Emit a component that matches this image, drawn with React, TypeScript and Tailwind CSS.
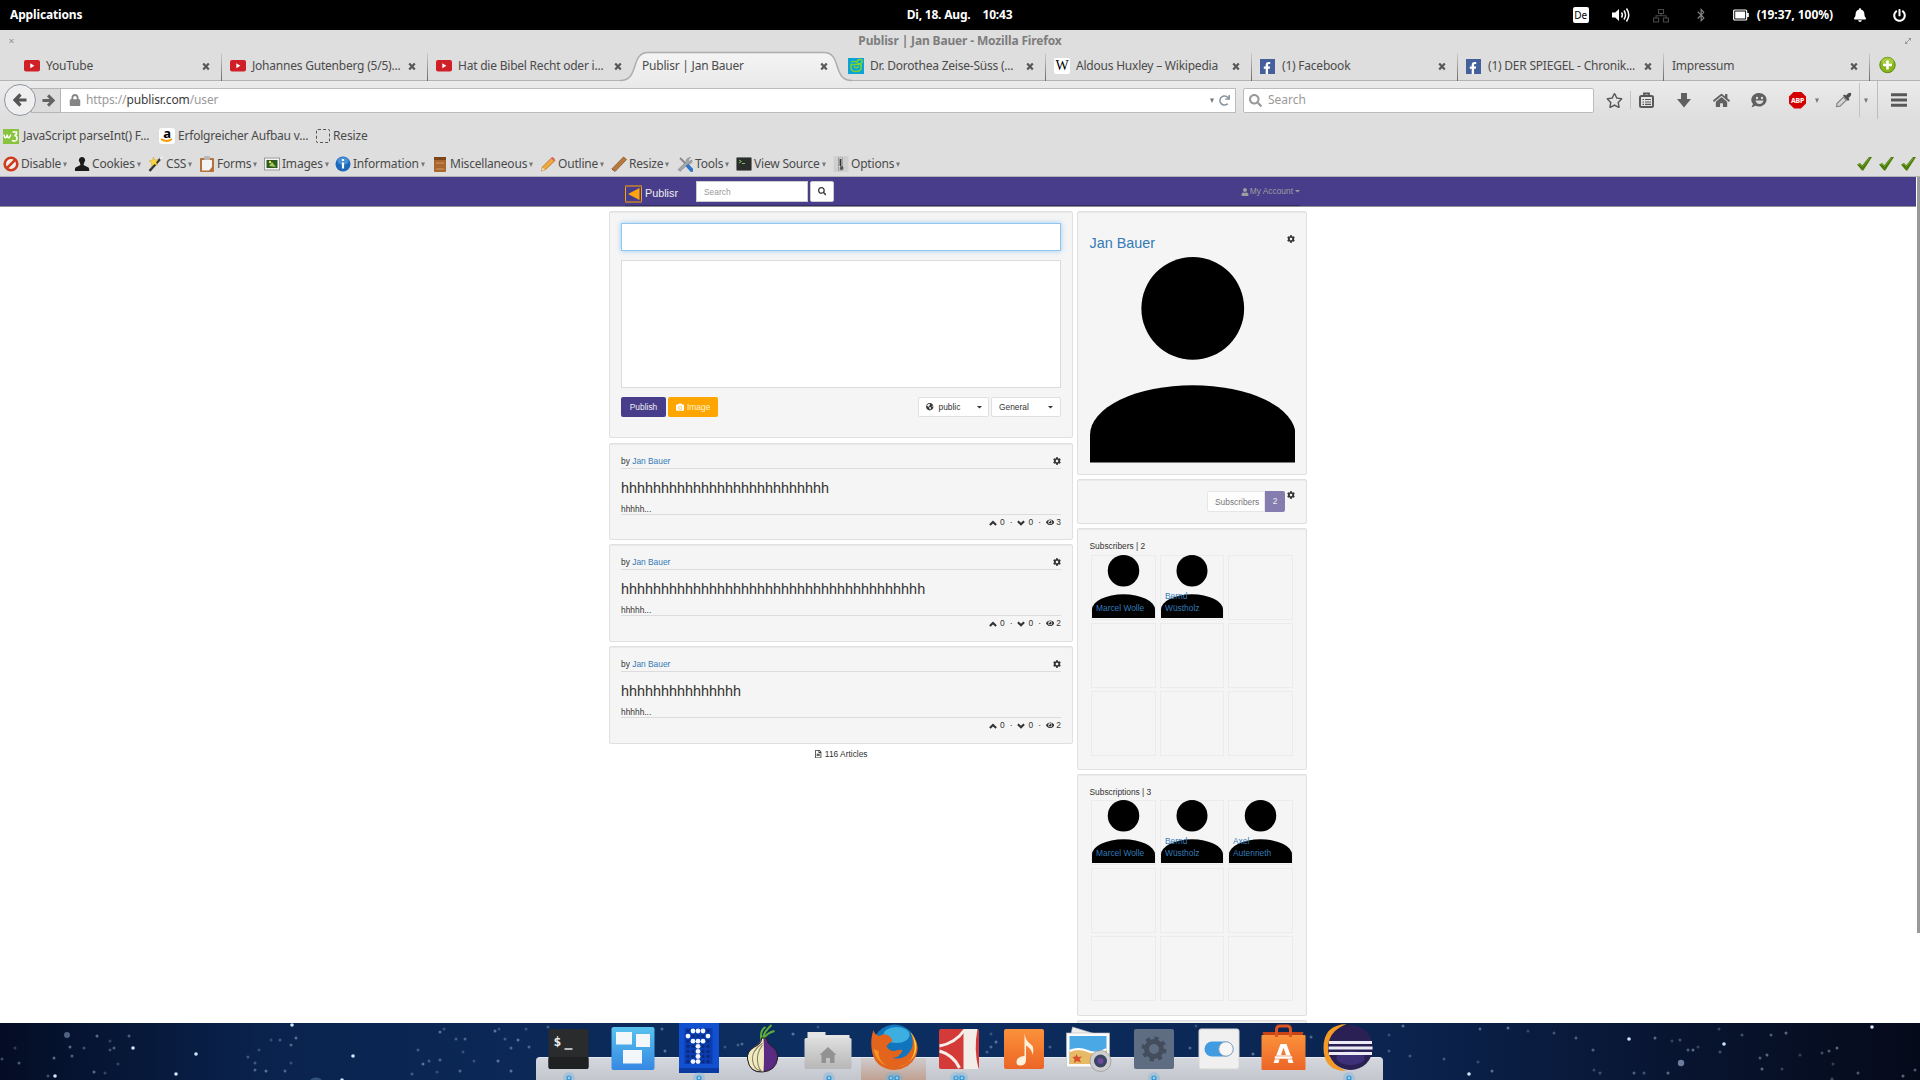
import React from "react";
import {
  FaLock, FaSearch, FaRedo, FaRegStar, FaHome,
  FaCog, FaEye, FaCamera, FaUser, FaGlobeAmericas, FaRegFileAlt,
  FaBell, FaPowerOff, FaFacebookF, FaBluetoothB,
} from "react-icons/fa";

type Kids = { children?: React.ReactNode };

/* ---------- small icons ---------- */

const YouTubeIcon = () => (
  <svg width="16" height="12" viewBox="0 0 16 12">
    <rect width="16" height="11.5" rx="2" fill="#cf2027" />
    <path d="M6.3 3.3 L10.4 5.8 L6.3 8.3Z" fill="#fff" />
  </svg>
);
const DnbIcon = () => (
  <svg width="16" height="16" viewBox="0 0 16 16">
    <rect width="16" height="16" fill="#0aa3d6" />
    <path d="M3 6.500h10v3q0 4-5 4t-5-4zM3 4q3-1.500 6 .5M9 4.500q0-3 3-3t2 2.500-5 1.500M5.500 8.500q3 2.500 5.500 0" fill="none" stroke="#7fd42a" strokeWidth="1.400" />
  </svg>
);
const WikiIcon = () => (
  <span className="flex h-4 w-4 items-center justify-center rounded-[2px] bg-white font-['Liberation_Serif',serif] text-[14px] leading-none text-black">W</span>
);
const FacebookIcon = () => (
  <span className="flex h-[15px] w-[15px] items-end justify-end bg-[#43609c] pr-[2px] text-[12px] text-white"><FaFacebookF /></span>
);
const Down = () => (
  <svg width="4" height="5" viewBox="0 0 4 5"><path d="M0 .5h4L2 5z" fill="#777" /></svg>
);
const Caret = ({ c = "#333" }: { c?: string }) => (
  <svg width="5" height="3" viewBox="0 0 5 3"><path d="M0 0h5L2.500 2.600z" fill={c} /></svg>
);
const CloseX = () => (
  <svg width="8" height="9" viewBox="0 0 8 9"><path d="M1.200 1.500 6.800 7.500M6.800 1.500 1.200 7.500" stroke="#585858" strokeWidth="2.200" /></svg>
);
const Check = () => (
  <svg width="15" height="14" viewBox="0 0 15 14">
    <path d="M0 7.500 3 6l2.300 2.300L12 0h3L6.300 13.500H5z" fill="#4c7d0c" />
    <path d="M1.500 7.500 3 7l2.500 2.500L12.500 1" fill="none" stroke="#74a927" strokeWidth="1" />
  </svg>
);
const Up7 = () => <svg className="mr-[3px]" width="8" height="6" viewBox="0 0 8 6"><path d="M.900 4.900 4 1.900l3.100 3" fill="none" stroke="#333" strokeWidth="2.100" /></svg>;
const Down7 = () => <svg className="mr-[3px]" width="8" height="6" viewBox="0 0 8 6"><path d="M.900 1.200 4 4.200l3.100-3" fill="none" stroke="#333" strokeWidth="2.100" /></svg>;

/* ---------- top panel ---------- */

function TopPanel() {
  return (
    <div className="grid h-[30px] w-full grid-cols-3 items-center bg-black text-[12px] font-bold text-white">
      <div className="pl-[10px] tracking-[-0.15px]">Applications</div>
      <div className="-ml-[1px] flex justify-center gap-[12px] tracking-[-0.2px]"><span>Di, 18. Aug.</span><span>10:43</span></div>
      <div className="flex items-center justify-end pr-[14px]">
        <span className="mr-[22px] flex h-4 w-4 items-center justify-center rounded-[2px] bg-white text-[10px] font-normal text-black">De</span>
        <svg className="mr-[22px]" width="20" height="16" viewBox="0 0 20 16">
          <path d="M1 5.500h3.200L8 2v12L4.200 10.500H1z" fill="#fff" />
          <path d="M10.500 5.500q1.600 2.500 0 5M13 3.500q3 4.500 0 9M15.500 1.500q4.500 6.500 0 13" fill="none" stroke="#fff" strokeWidth="1.500" />
        </svg>
        <svg className="mr-[25px]" width="16" height="15" viewBox="0 0 16 15" fill="none" stroke="#4a4a4a" strokeWidth="1.100">
          <path d="M5.500 1.500h5v4h-5zM.600 10h5v4h-5zM10.400 10h5v4h-5zM8 5.500v2.300M3 10V7.800h10V10" />
        </svg>
        <FaBluetoothB className="mr-[25px] text-[14px] text-[#858585]" />
        <svg className="mr-[8px]" width="16" height="12" viewBox="0 0 16 12">
          <rect x=".7" y="1" width="13" height="10" rx="1" fill="none" stroke="#fff" strokeWidth="1.200" />
          <rect x="2.200" y="2.500" width="10" height="7" fill="#fff" /><rect x="14" y="4" width="1.800" height="4" fill="#fff" />
        </svg>
        <span className="mr-[20px] tracking-[-0.05px]">(19:37, 100%)</span>
        <FaBell className="mr-[26px] text-[14px]" />
        <FaPowerOff className="text-[13px]" />
      </div>
    </div>
  );
}

/* ---------- browser chrome ---------- */

const tabs: { icon?: React.ReactNode; title: string; active?: boolean; noSep?: boolean }[] = [
  { icon: <YouTubeIcon />, title: "YouTube" },
  { icon: <YouTubeIcon />, title: "Johannes Gutenberg (5/5)..." },
  { icon: <YouTubeIcon />, title: "Hat die Bibel Recht oder i...", noSep: true },
  { title: "Publisr | Jan Bauer", active: true, noSep: true },
  { icon: <DnbIcon />, title: "Dr. Dorothea Zeise-Süss (..." },
  { icon: <WikiIcon />, title: "Aldous Huxley – Wikipedia" },
  { icon: <FacebookIcon />, title: "(1) Facebook" },
  { icon: <FacebookIcon />, title: "(1) DER SPIEGEL - Chronik..." },
  { title: "Impressum" },
];

function TabStrip() {
  return (
    <div className="flex h-[30px] border-b border-[#b4b4b4] pl-[15px]">
      {tabs.map((t) => (
        <div key={t.title} className="relative flex h-[30px] w-[206px] shrink-0 items-center pl-[9px]">
          {t.active && (
            <svg className="absolute left-[-15px] top-0" width="236" height="31" viewBox="0 0 236 31">
              <defs><linearGradient id="tab" x1="0" y1="0" x2="0" y2="1"><stop offset="0" stopColor="#f4f4f4" /><stop offset="1" stopColor="#ebebeb" /></linearGradient></defs>
              <path d="M2 29.500C22 29.500 12 1.500 30 1.500H206C224 1.500 214 29.500 234 29.500V31H2z" fill="url(#tab)" />
              <path d="M2 29.500C22 29.500 12 1.500 30 1.500H206C224 1.500 214 29.500 234 29.500" fill="none" stroke="#adadad" strokeWidth="1.500" />
            </svg>
          )}
          {t.icon && <span className="relative flex w-[22px] shrink-0 items-center">{t.icon}</span>}
          <span className="relative flex-1 whitespace-nowrap text-[12px] tracking-[-0.22px] text-[#4b4b4b]">{t.title}</span>
          <span className="relative mr-[11px] flex w-2"><CloseX /></span>
          {!t.noSep && <span className="absolute bottom-0 right-[-1px] h-[28px] w-px bg-linear-to-b from-[#cfcfcf] to-[#6a6a64]" />}
        </div>
      ))}
      <svg className="ml-[10px] mt-[5px]" width="18" height="18" viewBox="0 0 18 18">
        <circle cx="8.500" cy="9" r="7.700" fill="#86b51d" stroke="#5e8c10" />
        <ellipse cx="8.500" cy="5.500" rx="6" ry="4" fill="#b4d64c" opacity=".7" />
        <path d="M8.500 4.500v9M4 9h9" stroke="#fff" strokeWidth="2.600" />
      </svg>
    </div>
  );
}

function NavBar() {
  return (
    <div className="flex h-[38px] items-center bg-linear-to-b from-[#ebebeb] to-[#dedede] pl-[4px] text-[12px] text-[#9a9a9a]">
      <span className="relative z-10 flex h-[32px] w-[32px] items-center justify-center rounded-full border border-[#8b95a1] bg-[#efefef]">
        <svg width="14" height="14" viewBox="0 0 14 14"><path d="M7.500 1.500 2 7l5.500 5.500M2.500 7H13.500" fill="none" stroke="#555" strokeWidth="3.200" /></svg>
      </span>
      <span className="-ml-[5px] flex h-[25px] w-[30px] items-center justify-center border border-[#b5b5b5] bg-[#dcdcdc]">
        <svg className="ml-[4px]" width="13" height="13" viewBox="0 0 14 14"><path d="M6.500 1.500 12 7l-5.500 5.500M11.500 7H.5" fill="none" stroke="#636363" strokeWidth="3.200" /></svg>
      </span>
      <div className="flex h-[25px] w-[1175px] items-center border border-l-0 border-[#bcbcbc] bg-white pl-[8px] pr-[5px]">
        <FaLock className="mr-[5px] text-[12px] text-[#858585]" />
        <span className="flex-1 tracking-[-0.12px]">https://<span className="text-[#3c3c3c]">publisr.com</span>/user</span>
        <Down /><FaRedo className="ml-[5px] text-[11px] text-[#8995a1]" />
      </div>
      <div className="ml-[7px] flex h-[25px] w-[351px] items-center rounded-[2px] border border-[#bcbcbc] bg-white pl-[5px]">
        <FaSearch className="mr-[6px] text-[13px] text-[#999]" />Search
      </div>
      <div className="flex flex-1 items-center text-[#585858]">
        <FaRegStar className="ml-[12px] text-[17px]" />
        <span className="ml-[7px] h-[18px] w-px bg-[#c4c4c4]" />
        <svg className="ml-[8px]" width="15" height="17" viewBox="0 0 15 17" fill="none" stroke="#585858">
          <rect x="1" y="4" width="13" height="11" rx="1.500" strokeWidth="2" /><path d="M5 4V1.500h5V4" strokeWidth="1.800" /><path d="M3.500 7.500h1.500M6 7.500h6M3.500 10h1.500M6 10h6M3.500 12.300h1.500M6 12.300h6" strokeWidth="1.200" />
        </svg>
        <svg className="ml-[23px]" width="14" height="16" viewBox="0 0 14 16"><path d="M4 1h6v6h4l-7 8.500L0 7h4z" fill="#606060" /></svg>
        <FaHome className="ml-[22px] text-[17px] text-[#606060]" />
        <svg className="ml-[21px]" width="17" height="16" viewBox="0 0 17 16">
          <path d="M8.500 1a7.500 6.800 0 1 1-4 12.800L.500 15.500 2 12A7.500 6.800 0 0 1 8.500 1z" fill="#606060" />
          <circle cx="6" cy="6" r="1.200" fill="#ddd" /><circle cx="11" cy="6" r="1.200" fill="#ddd" /><path d="M4.500 8.500h8q-1 3.500-4 3.500t-4-3.500z" fill="#ddd" />
        </svg>
        <span className="ml-[21px] flex h-[17px] w-[17px] items-center justify-center bg-[#d40000] text-[7px] font-bold leading-none tracking-[-0.3px] text-white [clip-path:polygon(30%_0,70%_0,100%_30%,100%_70%,70%_100%,30%_100%,0_70%,0_30%)]">ABP</span>
        <span className="ml-[9px] flex"><Down /></span>
        <svg className="ml-[16px]" width="17" height="16" viewBox="0 0 17 16">
          <path d="m1.500 14.500.5-3L8.500 5l3 3L5 14.200z" fill="#d6d6d6" stroke="#858585" strokeWidth="1.200" />
          <path d="m8 3.500 1.500-1 1.500 1q2.500-3.500 5-2.500 1 2.500-2.500 5l1 1.500-1.500 1.500z" fill="#4d4d4d" />
        </svg>
        <span className="ml-[7px] h-[34px] w-px bg-[#c4c4c4]" />
        <span className="ml-[4px] flex"><Down /></span>
        <span className="ml-[9px] h-[38px] w-px bg-[#b9bec3]" />
        <svg className="ml-[13px]" width="16" height="14" viewBox="0 0 16 14"><path d="M0 1.800h16M0 7h16M0 12.200h16" stroke="#585858" strokeWidth="3" /></svg>
      </div>
    </div>
  );
}

function Bookmarks() {
  return (
    <div className="flex h-[30px] items-center pl-[3px] pt-[4px] text-[12px] text-[#4a4a4a]">
      <span className="flex w-[156px] items-center gap-[4px] whitespace-nowrap tracking-[-0.18px]">
        <svg width="16" height="15" viewBox="0 0 16 15"><rect width="16" height="15" fill="#8ac43f" /><path d="M1 5.500q.5 4 2 3t1.200-3q.3 4 2 3t1.300-3M9.500 3h4q.5 3-2 3.500 3 .5 2.500 3.500t-5 1.500" fill="none" stroke="#fff" strokeWidth="1.500" /></svg>
        JavaScript parseInt() F...
      </span>
      <span className="flex w-[157px] items-center gap-[3px] whitespace-nowrap tracking-[-0.2px]">
        <span className="flex h-4 w-4 flex-col items-center rounded-[3px] bg-white text-[13px] font-bold leading-[10px] text-black">
          a<svg width="14" height="4" viewBox="0 0 14 4"><path d="M1 1q6 4 11 0" fill="none" stroke="#f90" strokeWidth="1.800" /></svg>
        </span>
        Erfolgreicher Aufbau v...
      </span>
      <span className="flex items-center gap-[3px] tracking-[-0.15px]">
        <span className="h-[14px] w-[14px] rounded-[2px] border border-dashed border-[#555]" />Resize
      </span>
    </div>
  );
}

const devIcons: Record<string, React.ReactNode> = {
  Disable: <><circle cx="8" cy="8" r="6.300" fill="#eee" stroke="#cf3a1c" strokeWidth="2.600" /><path d="M3.800 12.200 12.200 3.800" stroke="#cf3a1c" strokeWidth="2.600" /></>,
  Cookies: <path d="M8 1a3.200 3.200 0 0 1 2.200 5.500l-.7 2.500 5 2.500q1 1 .7 3.500H1q-.5-2.500.5-3.500L6.500 9l-.7-2.500A3.200 3.200 0 0 1 8 1z" fill="#1b1b1b" />,
  CSS: <><path d="M1.500 15 13 2" stroke="#333" strokeWidth="2.400" /><path d="m5.500 1 1.200 3 3.300-.3-2 2.600 1.600 3-3.300-1.200L3.500 10.500l.4-3.500L1 5l3.200-.5z" fill="#f7d548" stroke="#d9a520" strokeWidth=".5" /><path d="m12 3.200 2.500-2.500" stroke="#f4f4f4" strokeWidth="2" /></>,
  Forms: <><rect x="1" y="2" width="14" height="14" rx="1" fill="#b5713a" /><path d="M3 4h10v7l-3 3.500H3z" fill="#f4f4f4" /><rect x="5" y="0" width="6" height="4" rx="1" fill="#b8b8b8" /></>,
  Images: <><rect x=".5" y="2" width="15" height="12" fill="#f4f4f4" stroke="#999" /><rect x="2.500" y="4" width="11" height="8" fill="#2c5d1e" /><path d="m5 10 3-4 4 5z" fill="#a7c95d" /><circle cx="6" cy="6" r="1.200" fill="#f3e46a" /></>,
  Information: <><circle cx="8" cy="8" r="7.500" fill="#1c68bd" /><ellipse cx="8" cy="5" rx="5.500" ry="3.800" fill="#5ba2e4" opacity=".7" /><path d="M8 3v2M8 6.500v6" stroke="#fff" strokeWidth="2.200" /></>,
  Miscellaneous: <><rect x="2" y="1" width="12" height="15" rx="1" fill="#a8672e" /><rect x="2" y="1" width="12" height="3" fill="#7d4518" /><path d="M4 7h8M4 13h8" stroke="#d69a5c" /></>,
  Outline: <><path d="m1.500 15 1-4L12 1.500 15 4.500 5.500 13.500z" fill="#f3a83c" stroke="#ad6a1d" strokeWidth=".8" /><path d="m11 2.500 1.500-1.500q2 .5 2.500 3L13.500 5z" fill="#d66" /><path d="m1.500 15 1-3.500 2.500 2.500z" fill="#f2ddbb" /></>,
  Resize: <path d="M.800 13 12.500 1l3 2.500L4 15.500z" fill="#b7793e" stroke="#85501f" strokeWidth=".8" />,
  Tools: <><path d="m3 2 8 8" stroke="#888" strokeWidth="2" /><path d="m10 9 4.500 5" stroke="#2f74c9" strokeWidth="3.800" strokeLinecap="round" /><path d="M13.500 1.500 11 4l1 1.500 3-1.500q.5 4-4 4L3 15.500 1 13.500 9 6q-.5-4 4.500-4.500z" fill="#a3a6aa" stroke="#73777b" strokeWidth=".5" /></>,
  "View Source": <><rect x=".5" y="1.500" width="15" height="13" rx="1" fill="#2b2d2b" stroke="#77797b" /><path d="m3 4 2.500 1.500L3 7M6 7.500h3" fill="none" stroke="#74c35e" /></>,
  Options: <><rect x=".5" y="0" width="15" height="16" fill="#cfcfcf" /><rect x="5.500" y="2" width="4" height="12" fill="#f3f3f3" stroke="#888" strokeWidth=".7" /><path d="M7.500 3v7" stroke="#333" strokeWidth="2" /><circle cx="8.500" cy="12" r="2" fill="#555" /></>,
};

function DevItem({ name, cls }: { name: string; cls: string }) {
  return (
    <span className={"flex shrink-0 items-center whitespace-nowrap " + cls}>
      <svg className="mr-[2px] shrink-0" width="16" height="16" viewBox="0 0 16 16">{devIcons[name]}</svg>
      <span>{name}</span><span className="ml-[2px]"><Down /></span>
    </span>
  );
}

function DevToolbar() {
  return (
    <div className="flex h-[27px] items-center pl-[3px] pt-[3px] text-[12px] tracking-[-0.2px] text-[#4a4a4a]">
      <DevItem name="Disable" cls="w-[71px]" />
      <DevItem name="Cookies" cls="w-[74px]" />
      <DevItem name="CSS" cls="w-[51px]" />
      <DevItem name="Forms" cls="w-[65px]" />
      <DevItem name="Images" cls="w-[71px]" />
      <DevItem name="Information" cls="w-[97px]" />
      <DevItem name="Miscellaneous" cls="w-[108px]" />
      <DevItem name="Outline" cls="w-[71px]" />
      <DevItem name="Resize" cls="w-[66px]" />
      <DevItem name="Tools" cls="w-[59px]" />
      <DevItem name="View Source" cls="w-[97px]" />
      <DevItem name="Options" cls="w-[80px]" />
      <span className="ml-auto flex gap-[7px] pr-[4px]"><Check /><Check /><Check /></span>
    </div>
  );
}

function Chrome() {
  return (
    <div className="h-[147px] border-b border-[#b3b3b3] bg-[#dedede]">
      <div className="flex h-[21px] items-center justify-between px-[9px] text-[12px] font-bold text-[#7d7d7d]">
        <svg width="6" height="6" viewBox="0 0 6 6"><path d="m.5 1 4 4M4.500 1 .5 5" stroke="#888" /></svg>
        <span className="tracking-[-0.15px]">Publisr | Jan Bauer - Mozilla Firefox</span>
        <svg width="6" height="6" viewBox="0 0 6 6"><path d="M0 6 6 0M3.500.500H5.500V2.500M.500 3.500V5.500H2.500" fill="none" stroke="#999" /></svg>
      </div>
      <TabStrip />
      <NavBar />
      <Bookmarks />
      <DevToolbar />
    </div>
  );
}

/* ---------- Publisr page ---------- */

function SiteNav() {
  return (
    <div className="h-[30px] w-[1916px] border-b border-b-[#8d8d92] bg-[#483d8b] pl-[625px] pr-[616px]">
      <div className="flex h-[29px] border-b border-[#332c63] text-[8.4px]">
        <svg className="mt-[8px]" width="17" height="18" viewBox="0 0 17 18">
          <rect x=".5" y=".8" width="16" height="16" fill="none" stroke="#ffa500" /><path d="M0 1h17M0 17h17" stroke="#a87042" strokeWidth="1.800" /><path d="M3 9 14.500 3v12z" fill="#fca311" />
        </svg>
        <span className="ml-[3px] mt-[8px] w-[51px] text-[10.8px] leading-[16px] text-[#eee]">Publisr</span>
        <div className="mt-[4px] h-[21px] w-[112px] border border-[#ccc] bg-white pl-[7px] leading-[20px] text-[#999]">Search</div>
        <div className="ml-[2px] mt-[4px] flex h-[21px] w-[24px] items-center justify-center rounded-[2px] border border-[#ccc] bg-white text-[#333]"><FaSearch /></div>
        <div className="ml-auto mt-[4px] flex h-[21px] items-center text-[#9d9d9d]"><FaUser className="mr-[1px] text-[8px]" />My Account<span className="ml-[2px]"><Caret c="#9d9d9d" /></span></div>
      </div>
    </div>
  );
}

const Card = ({ cls, children }: Kids & { cls: string }) => (
  <section className={"shrink-0 rounded-[2px] border border-[#e0e0e0] bg-[#f5f5f5] shadow-[inset_0_1px_1px_rgba(0,0,0,0.05)] " + cls}>{children}</section>
);

function Article({ title, views, cls }: { title: string; views: number; cls: string }) {
  return (
    <Card cls={"px-[11px] pt-[11px] " + cls}>
      <div className="flex h-[14px] items-center justify-between border-b border-[#dcdcdc] pb-[2px]">
        <span className="pt-[1px]">by <a className="text-[#337ab7]">Jan Bauer</a></span><FaCog className="text-[8px]" />
      </div>
      <h3 className="mt-[11px] h-[16px] text-[14.4px] leading-[16px]">{title}</h3>
      <div className="mt-[7px] h-[12px] border-b border-[#dcdcdc] leading-[12px]">hhhhh...</div>
      <div className="mt-[1px] flex h-[13px] items-center justify-end">
        <Up7 />0<span className="mx-[5px]">·</span>
        <Down7 />0<span className="mx-[5px]">·</span>
        <FaEye className="mr-[2px] text-[8.400px]" />{views}
      </div>
    </Card>
  );
}

function Composer() {
  return (
    <Card cls="h-[227px] px-[11px] pt-[11px]">
      <div className="h-[28px] border border-[#8fc7f2] bg-white shadow-[0_0_5px_rgba(102,175,233,0.6)]" />
      <div className="mt-[9px] h-[128px] border border-[#dcdcdc] bg-white" />
      <div className="mt-[9px] flex h-[20px]">
        <button className="w-[45px] rounded-[2px] bg-[#483d8b] text-[#eee]">Publish</button>
        <button className="ml-[2px] flex w-[50px] items-center justify-center gap-[3px] rounded-[2px] bg-[#ffa500] text-[#fff3d8]"><FaCamera className="text-white" />Image</button>
        <div className="ml-auto flex w-[71px] items-center rounded-[2px] border border-[#e0e0e0] bg-white pl-[7px] pr-[6px]"><FaGlobeAmericas className="mr-[5px] text-[7.500px]" /><span className="flex-1">public</span><Caret /></div>
        <div className="ml-[2px] flex w-[70px] items-center rounded-[2px] border border-[#e0e0e0] bg-white pl-[7px] pr-[7px]"><span className="flex-1">General</span><Caret /></div>
      </div>
    </Card>
  );
}

const Silhouette = ({ cls }: { cls: string }) => (
  <svg className={cls} viewBox="0 0 206 206" preserveAspectRatio="none">
    <circle cx="103" cy="51.500" r="51.500" /><path d="M0 206V178.500A103 50 0 0 1 206 178.500V206z" />
  </svg>
);

function PeopleGrid({ label, people, top }: { label: string; people: string[][]; top: string }) {
  return (
    <Card cls="h-[242px] px-[12px]">
      <div className={"-ml-[0.5px] mt-[11px] leading-[12px] " + top}>{label}</div>
      <div className="ml-[1px] grid w-[202px] grid-cols-[65px_64px_65px] grid-rows-[65px_65px_65px] gap-x-[4px] gap-y-[3px]">
        {Array.from({ length: 9 }, (_, i) => (
          <div key={i} className="relative border border-[#ebebeb]">
            {people[i] && (
              <>
                <Silhouette cls="-mt-px h-[63px] w-full" />
                <div className="absolute bottom-[5px] left-[4px] whitespace-nowrap leading-[12px] text-[#337ab7]">{people[i].map((w) => <div key={w}>{w}</div>)}</div>
              </>
            )}
          </div>
        ))}
      </div>
    </Card>
  );
}

const bernd = ["Bernd", "Wüstholz"];

function Page() {
  return (
    <div className="relative h-[846px] overflow-hidden bg-white font-['Liberation_Sans',Arial,sans-serif] text-[8.4px] text-[#333]">
      <span className="absolute right-0 top-0 h-[756px] w-[3px] bg-[#999]" />
      <SiteNav />
      <div className="flex gap-[4px] pl-[609px] pt-[4px]">
        <main className="flex w-[464px] flex-col">
          <Composer />
          <Article title={"h".repeat(26)} views={3} cls="mt-[5px] h-[97px]" />
          <Article title={"h".repeat(38)} views={2} cls="mt-[4px] h-[98px]" />
          <Article title={"h".repeat(15)} views={2} cls="mt-[4px] h-[98px]" />
          <div className="mt-[4px] flex h-[12px] items-center justify-center gap-[2px]"><FaRegFileAlt />116 Articles</div>
        </main>
        <aside className="flex w-[230px] flex-col gap-[4px]">
          <Card cls="h-[264px] px-[11px] pt-[21px]">
            <div className="flex h-[24px] justify-between">
              <span className="ml-[0.5px] text-[14.4px] leading-[20px] text-[#337ab7]">Jan Bauer</span><FaCog className="mt-[2px] text-[8px]" />
            </div>
            <Silhouette cls="ml-[0.5px] h-[205.5px] w-[205.5px]" />
          </Card>
          <Card cls="flex h-[45px] justify-end pr-[11px] pt-[11px]">
            <span className="h-[21px] w-[58px] rounded-l-[2px] border border-[#e6e6e6] bg-[#fdfdfd] pl-[7px] leading-[20px] text-[#777]">Subscribers</span>
            <span className="mr-[2px] h-[21px] w-[20px] rounded-r-[2px] bg-[#857db0] text-center leading-[21px] text-[#eee]">2</span>
            <FaCog className="text-[8px]" />
          </Card>
          <PeopleGrid label="Subscribers | 2" people={[["Marcel Wolle"], bernd]} top="mb-[3px]" />
          <PeopleGrid label="Subscriptions | 3" people={[["Marcel Wolle"], bernd, ["Axel", "Autenrieth"]]} top="mb-[2px]" />
          <Card cls="h-[40px]" />
        </aside>
      </div>
    </div>
  );
}

/* ---------- desktop background and dock ---------- */

const bright = [[292, 2], [133, 25], [196, 31], [353, 33], [176, 51], [55, 53], [342, 57], [1872, 4], [1629, 16], [1469, 51], [1724, 21]];
const dim = [
  [15, 25], [84, 25], [129, 13], [97, 13], [110, 18], [110, 27], [114, 25], [54, 35], [118, 41], [2, 36], [19, 40], [94, 49], [105, 50], [48, 53], [72, 33], [70, 24],
  [271, 17], [280, 17], [291, 22], [296, 15], [291, 40], [255, 40], [255, 47], [266, 48], [259, 27], [248, 34], [285, 48], [440, 9], [444, 6], [456, 16], [465, 16],
  [495, 8], [499, 6], [505, 16], [511, 25], [498, 38], [474, 38], [429, 38], [440, 37], [423, 41], [437, 49], [412, 51], [460, 48], [511, 48], [463, 29], [418, 27],
  [529, 24], [518, 17], [526, 6], [548, 4], [662, 6], [665, 28], [725, 24], [738, 22], [742, 21], [793, 11], [818, 4], [987, 29], [991, 24], [996, 19], [991, 11],
  [1050, 24], [1190, 25], [1253, 31], [1196, 3], [1389, 28], [1311, 14], [1403, 3], [1389, 12], [1410, 33], [1480, 6], [1508, 5], [1528, 8], [1554, 10], [1576, 15],
  [1655, 15], [1672, 18], [1680, 17], [1688, 27], [1693, 27], [1698, 24], [1742, 12], [1771, 12], [1786, 10], [1719, 6], [1720, 29], [1760, 35], [1767, 32], [1800, 32],
  [1822, 30], [1829, 28], [1837, 25], [1833, 41], [1832, 56], [1858, 50], [1762, 46], [1782, 46], [1644, 50], [1634, 50], [1668, 50], [1594, 47], [1600, 50], [1593, 27],
  [1492, 48], [1478, 39], [1444, 36], [1915, 47], [1903, 53],
];

const Stars = () => (
  <svg className="absolute left-0 top-0" width="1920" height="57" viewBox="0 0 1920 57">
    {dim.map(([x, y], i) => <circle key={i} cx={x} cy={y} r={1.5} fill="#9fb4d0" opacity={0.3 + (i % 4) * 0.08} />)}
    {bright.map(([x, y], i) => <circle key={i} cx={x} cy={y} r={1.8} fill="#cfe6ff" />)}
    <circle cx="67" cy="12" r="3" fill="#8da0c4" opacity=".55" /><circle cx="1681" cy="40" r="3.200" fill="#8da0c4" opacity=".75" />
    <ellipse cx="316" cy="58" rx="6" ry="3.500" fill="#6d93c4" opacity=".4" />
  </svg>
);

const ledRows = ["01110", "10001", "01110", "00100", "00100", "00100", "01100"];

/* Each drawing sits in a 65x57 slot. */
const dock: { dots: number; hot?: boolean; art: React.ReactNode }[] = [
  { dots: 1, art: <><rect x="13" y="6" width="40" height="40" rx="2" fill="#2a2b2d" /><rect x="13" y="34" width="40" height="12" rx="2" fill="#1f2022" /><text x="18" y="23" fill="#eee" fontSize="13" fontWeight="bold" fontFamily="DejaVu Sans Mono, monospace">$</text><path d="M29 26h8" stroke="#ddd" strokeWidth="1.600" /></> },
  { dots: 0, art: <><rect x="11" y="4" width="43" height="43" rx="2" fill="url(#blue)" /><path d="M15.500 9h16v12.500h-16zM35.500 11h14v13h-14zM22.500 27h19v13.500h-19z" fill="#f3f7fa" /></> },
  { dots: 1, art: <><rect x="13.500" y="0" width="40" height="50" fill="#1150cf" /><rect x="13.500" y="45" width="40" height="5" fill="#0a3aa0" /><rect x="19" y="5" width="28" height="36" fill="#0b3db0" />
    {ledRows.map((row, r) => row.split("").map((v, c) => <circle key={r + "-" + c} cx={22.5 + c * 5} cy={8 + r * 5.1} r={v === "1" ? 2.4 : 1.7} fill={v === "1" ? "#f2f6ff" : "#0a2a80"} />))}</> },
  { dots: 0, art: <><path d="M31 17Q29 8 35 4M32 17Q33 9 41 2M33 16Q36 10 44 8" fill="none" stroke="#5fae3a" strokeWidth="2" /><path d="M31 15q2 2 5 0 0 5 6 9t5 12q-2 12-15 13T17 37q-1-9 6-13t8-9z" fill="#5b2a82" /><path d="M33 16q1 16 0 33Q17 48 17 36q0-8 7-12t7-9z" fill="#f0eac0" /><path d="M32 20q-11 8-10 17t8 11M32 22q-6 8-5 16t4 10" fill="none" stroke="#8a8160" strokeWidth="1.100" /><path d="M17 36Q16 28 24 24T31 15h5q0 5 6 9t5 12q-2 12-15 13T17 36z" fill="none" stroke="#222" strokeWidth="1" /></> },
  { dots: 1, art: <><path d="M12 9h18v3h24v34H12z" fill="#e4e4e4" /><rect x="9" y="15" width="47" height="31" rx="1.500" fill="url(#grey)" /><path d="M32.500 24 41 32h-2v8h-4.500v-5h-4v5H26v-8h-2z" fill="#929292" /></> },
  { dots: 2, hot: true, art: <><circle cx="34" cy="23" r="21.500" fill="#1175bd" /><ellipse cx="36" cy="12" rx="13" ry="8" fill="#48bde8" opacity=".8" /><path d="M13 7q1 5 6 6 4-3 8-1 4 2 5 6-4 2-6 5 2 5 8 5 5-2 8-1-2 7-10 8 13 3 19-9 3-8-1-17 11 13 5 25T34 47Q13 46 11 25q-1-10 2-18z" fill="#e3641c" /><path d="M50 9q10 13 3 25-7 9-16 10 15-3 17-17 1-9-4-18z" fill="#fbd43b" /><path d="M13 26q2 12 13 17-9-7-8-15z" fill="#f39325" /></> },
  { dots: 2, art: <><rect x="13.500" y="6" width="40" height="40" rx="2" fill="#d33a38" /><path d="M38 6h14q-4 20 1 40H38z" fill="#f2ede6" /><path d="M14 23Q30 20 39 7M14 28q14 4 20 17" fill="none" stroke="#f7eee9" strokeWidth="3" /></> },
  { dots: 0, art: <><rect x="13.500" y="6" width="40" height="40" rx="2" fill="url(#orange)" /><path d="M34 10q.5 7 5.500 10.500T42 32q-.5-6-6.500-9.500V37q0 5-5 5.500t-4.500-4q.500-5 8-5.500z" fill="#fff1dc" /></> },
  { dots: 0, art: <><path d="m17 4 36 11-4 18-36-10z" fill="#eee" stroke="#bbb" strokeWidth=".6" /><rect x="11" y="10" width="43" height="34" fill="#fafafa" stroke="#bbb" strokeWidth=".6" /><rect x="14" y="13" width="37" height="28" fill="#4aa9e4" /><path d="M14 28q9-4 18 0t19-2v15H14z" fill="#e7ba68" /><path d="M14 28q9-4 18 0t19-2" fill="none" stroke="#fff" strokeWidth="2" /><path d="m21 31 1.500 3 4-.5-2.500 2.500 1.500 3.500-4-1.500-3 2 .5-3.500-2-2.500 3-.5z" fill="#d8502c" /><circle cx="45" cy="38" r="10.500" fill="#cfcfcf" stroke="#888" strokeWidth=".6" /><circle cx="45" cy="38" r="6.500" fill="#3b4566" /><circle cx="45" cy="38" r="3" fill="#6b4b9a" /></> },
  { dots: 1, art: <><rect x="13.500" y="6" width="40" height="40" rx="2" fill="#5f6d83" /><circle cx="33.500" cy="26" r="7.500" fill="none" stroke="#434d5c" strokeWidth="5" /><circle cx="33.500" cy="26" r="10.800" fill="none" stroke="#434d5c" strokeWidth="3.500" strokeDasharray="4.200 4.280" /></> },
  { dots: 0, art: <><rect x="13.500" y="6" width="40" height="40" rx="2" fill="#f0f0f0" stroke="#d5d5d5" /><rect x="19" y="18.500" width="29" height="15" rx="7.500" fill="#409be0" /><circle cx="40.500" cy="26" r="7.200" fill="#f7f7f7" stroke="#91a8bc" /></> },
  { dots: 0, art: <><path d="M12 9h41l-2 6H14z" fill="#c54315" /><rect x="11" y="12" width="44" height="35" rx="1" fill="url(#orange)" /><path d="M26 14V7q0-4 3-4h8q3 0 3 4v7" fill="none" stroke="#dd5322" strokeWidth="3" /><path d="M23 40h5l1-4h8l1 4h5l-7-19h-6zM30.500 32l2.500-7.500L35.500 32z" fill="#fff" /><path d="M24 33h18v3H24z" fill="#fff" stroke="#ef7131" strokeWidth=".6" /></> },
  { dots: 1, art: <><path d="M31 1Q8 2 8 25t23 23Q12 40 13 24T31 1z" fill="#f59a22" /><circle cx="35" cy="24.500" r="22.500" fill="#2b2053" /><ellipse cx="35" cy="35" rx="14" ry="7" fill="#4b3a92" opacity=".6" /><path d="M13.500 19.500h43M13 25h44M13.500 30.500h43" stroke="#ecebf5" strokeWidth="3" /></> },
];

function Dock() {
  return (
    <div className="relative h-[57px] overflow-hidden bg-[linear-gradient(90deg,#040d24,#0a234e_14%,#0c2f62_45%,#0b2450_72%,#08142f_88%,#050a1a)]">
      <Stars />
      <div className="relative ml-[536px] h-[57px] w-[847px]">
        <div className="absolute inset-x-0 bottom-0 h-[23px] rounded-t-[4px] border-t border-[#e6e8ee] bg-linear-to-b from-[#d5d7de] to-[#c4c6ce]" />
        <div className="relative flex">
          {dock.map((d, i) => (
            <svg key={i} className="shrink-0" width="65" height="57" viewBox="0.5 0 65 57">
              <defs>
                <linearGradient id="blue" x1="0" y1="0" x2="0" y2="1"><stop stopColor="#58c2ef" /><stop offset="1" stopColor="#3688e3" /></linearGradient>
                <linearGradient id="grey" x1="0" y1="0" x2="0" y2="1"><stop stopColor="#dedede" /><stop offset="1" stopColor="#b7b7b7" /></linearGradient>
                <linearGradient id="orange" x1="0" y1="0" x2="0" y2="1"><stop stopColor="#fb923b" /><stop offset="1" stopColor="#ec6526" /></linearGradient>
                <linearGradient id="hot" x1="0" y1="0" x2="0" y2="1"><stop stopColor="#cfcbcd" /><stop offset="1" stopColor="#c0a191" /></linearGradient>
              </defs>
              {d.hot && <rect x="0" y="35" width="66" height="22" fill="url(#hot)" />}
              {d.art}
              {Array.from({ length: d.dots }, (_, k) => {
                const x = d.dots === 1 ? 33.5 : 30.5 + k * 6;
                return <g key={k}><circle cx={x} cy="55" r="6" fill="#5db4e8" opacity=".3" /><circle cx={x} cy="55" r="2" fill="#8fd0f2" stroke="#2f92d0" strokeWidth="1.200" /></g>;
              })}
            </svg>
          ))}
        </div>
      </div>
    </div>
  );
}

export default function App() {
  return (
    <div className="h-[1080px] w-[1920px] overflow-hidden bg-white font-['Noto_Sans','Open_Sans',sans-serif]">
      <TopPanel />
      <Chrome />
      <Page />
      <Dock />
    </div>
  );
}
